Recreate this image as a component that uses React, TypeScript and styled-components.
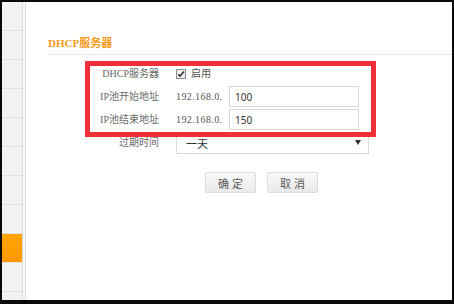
import React from 'react';
import styled, { createGlobalStyle } from 'styled-components';

const GlobalStyle = createGlobalStyle`
  html, body {
    margin: 0;
    padding: 0;
    background: #0a0a0a;
  }
`;

const Frame = styled.div`
  width: 454px;
  height: 304px;
  box-sizing: border-box;
  padding: 2px 2px 4px 2px;
  background: #0a0a0a;
  display: flex;
  overflow: hidden;
`;

const Sidebar = styled.nav`
  width: 20px;
  flex: none;
  background: #f2f2f2;
  border-right: 1px solid #dcdcdc;
  display: flex;
  flex-direction: column;
`;

const NavItem = styled.div<{ active?: boolean }>`
  height: 28px;
  flex: none;
  border-bottom: 1px solid #e1e1e1;
  background: ${({ active }) =>
    active ? 'linear-gradient(#ffa400, #fd9800)' : 'transparent'};
`;

const Gutter = styled.div`
  width: 2px;
  flex: none;
  background: #f7f7f7;
  border-right: 1px solid #dcdcdc;
`;

const Content = styled.main`
  flex: 1;
  min-width: 0;
  background: #fff;
  position: relative;
  display: flex;
  flex-direction: column;
`;

const Title = styled.h2`
  margin: 34px 0 0 22px;
  padding-bottom: 4px;
  border-bottom: 1px solid #e6e6e6;
  font: bold 11px/14px 'Liberation Serif', 'Noto Sans CJK SC', serif;
  color: #f59a1d;
`;

const Form = styled.div`
  margin-top: 7px;
  display: grid;
  grid-template-columns: 133px 1fr;
  grid-auto-rows: 23px;
  column-gap: 17px;
  align-items: center;
`;

const Label = styled.span`
  text-align: right;
  font: 10px/14px 'Liberation Serif', 'Noto Sans CJK SC', serif;
  color: #6a6a6a;
  white-space: nowrap;
`;

const Field = styled.div`
  display: flex;
  align-items: center;
  font: 10px/14px 'Liberation Serif', 'Noto Sans CJK SC', serif;
  color: #555;
`;

const Prefix = styled.span`
  width: 53px;
  flex: none;
  letter-spacing: 0.4px;
`;

const Input = styled.div`
  width: 130px;
  height: 21px;
  box-sizing: border-box;
  border: 1px solid #d6d6d6;
  padding-left: 5px;
  display: flex;
  align-items: center;
  font: 10px 'Noto Sans', sans-serif;
  color: #333;
`;

const Check = styled.span`
  display: inline-flex;
  margin-right: 5px;
`;

const Select = styled.div`
  width: 193px;
  height: 22px;
  box-sizing: border-box;
  border: 1px solid #dadada;
  padding: 0 7px 0 9px;
  display: flex;
  align-items: center;
  justify-content: space-between;
  font: 11px 'Noto Sans CJK SC', sans-serif;
  color: #333;
`;

const Actions = styled.div`
  margin-top: 18px;
  padding-left: 179px;
  display: flex;
  gap: 11px;
`;

const Button = styled.button`
  width: 51px;
  height: 21px;
  padding: 0;
  border: 1px solid #dcdcdc;
  border-radius: 2px;
  background: linear-gradient(#fafafa, #e9e9e9);
  font: 11px 'Noto Sans CJK SC', sans-serif;
  color: #5a5a5a;
  letter-spacing: 3px;
  text-indent: 3px;
`;

const Highlight = styled.div`
  position: absolute;
  left: 59px;
  top: 59px;
  width: 291px;
  height: 76px;
  box-sizing: border-box;
  border: 5px solid #ef2f38;
  pointer-events: none;
`;

const CheckIcon = () => (
  <svg width='10' height='10' viewBox='0 0 10 10'>
    <rect x='0.5' y='0.5' width='9' height='9' fill='#f0f0f0' stroke='#8a8a8a' />
    <path d='M2.2 5.2 L4.1 7.1 L7.9 2.6' fill='none' stroke='#333' strokeWidth='1.6' />
  </svg>
);

const ArrowIcon = () => (
  <svg width='6' height='5' viewBox='0 0 6 5'>
    <path d='M0 0 H6 L3 5 Z' fill='#333' />
  </svg>
);

const navItems = Array.from({ length: 10 }, (_, i) => i === 8);

const App = () => (
  <>
    <GlobalStyle />
    <Frame>
      <Sidebar>
        {navItems.map((active, i) => (
          <NavItem key={i} active={active} />
        ))}
      </Sidebar>
      <Gutter />
      <Content>
        <Title>DHCP服务器</Title>
        <Form>
          <Label>DHCP服务器</Label>
          <Field>
            <Check>
              <CheckIcon />
            </Check>
            启用
          </Field>
          <Label>IP池开始地址</Label>
          <Field>
            <Prefix>192.168.0.</Prefix>
            <Input>100</Input>
          </Field>
          <Label>IP池结束地址</Label>
          <Field>
            <Prefix>192.168.0.</Prefix>
            <Input>150</Input>
          </Field>
          <Label>过期时间</Label>
          <Field>
            <Select>
              <span>一天</span>
              <ArrowIcon />
            </Select>
          </Field>
        </Form>
        <Actions>
          <Button>确定</Button>
          <Button>取消</Button>
        </Actions>
        <Highlight />
      </Content>
    </Frame>
  </>
);

export default App;
